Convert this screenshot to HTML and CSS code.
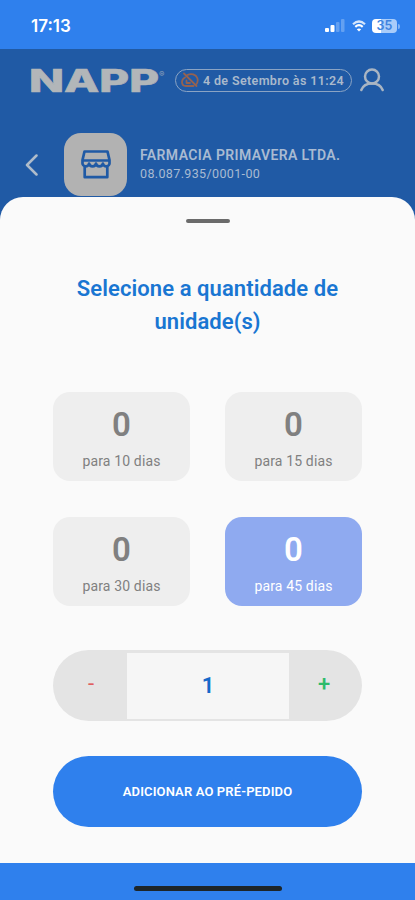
FILE: index.html
```html
<!DOCTYPE html>
<html lang="pt-BR">
<head>
<meta charset="utf-8">
<meta name="viewport" content="width=device-width, initial-scale=1">
<title>NAPP</title>
<link rel="stylesheet" href="styles.css">
</head>
<body>
<div class="status">
  <span class="time">17:13</span>
  <svg class="signal" width="20" height="14" viewBox="0 0 20 14"><g fill="#fff"><rect x="0" y="9" width="4" height="4" rx="1"/><rect x="5.500" y="6" width="4" height="7" rx="1"/><rect x="11" y="3" width="3.500" height="10" rx="1" opacity=".25"/><rect x="16" y="0" width="3.500" height="13" rx="1" opacity=".25"/></g></svg>
  <svg class="wifi" width="14" height="12" viewBox="0 0 14 12" fill="none" stroke="#fff" stroke-width="2.200"><path d="M1 4.200Q7-1.200 13 4.200" opacity=".8"/><path d="M3.300 6.800Q7 3.600 10.700 6.800"/><path d="M7 11.500 4.800 9.200Q7 7.600 9.200 9.200Z" fill="#fff" stroke="none"/></svg>
  <span class="battery">35</span><i class="battery-tip"></i>
</div>
<header class="top">
  <div class="brand-row">
    <svg class="logo" width="140" height="26" viewBox="0 0 140 26"><text x="0" y="25" textLength="130" lengthAdjust="spacingAndGlyphs" class="logo-text">NAPP</text><text x="130" y="9.500" class="reg">®</text></svg>
    <div class="sync">
      <svg width="18" height="16" viewBox="0 0 18 16" fill="none" stroke="#946250" stroke-width="1.800" stroke-linecap="round" stroke-linejoin="round"><path d="M4 5.500C2 6.500 1 8 1 10c0 2.500 1.800 4 4 4h7.500M6.500 3C10 1 15 2.500 16.300 6c.8 2.500.3 5-1.500 6.800M3 1.500l12.500 12.500M5.500 8.500v2.500h3.500"/></svg>
      <span>4 de Setembro às 11:24</span>
    </div>
    <svg class="user" width="26" height="24" viewBox="0 0 26 24" fill="none" stroke="#a9b5c3" stroke-width="2.500" stroke-linecap="round"><circle cx="13" cy="8.500" r="7"/><path d="M2.300 22C4 17.500 7.500 15.500 13 15.500S22 17.500 23.700 22"/></svg>
  </div>
  <div class="store-row">
    <svg class="back" width="13" height="22" viewBox="0 0 13 22" fill="none" stroke="#afbcca" stroke-width="2.500" stroke-linecap="round" stroke-linejoin="round"><path d="M11.500 1.500 2 11 11.500 20.500"/></svg>
    <div class="store-icon"><svg width="30" height="29" viewBox="0 0 30 29" fill="none" stroke="#205aa5" stroke-width="2.700" stroke-linejoin="round" stroke-linecap="round"><path d="M3.500 1.500h23l2 8.500v2.500a3.300 3.300 0 0 1-6.600 1 3.500 3.500 0 0 1-6.900 0 3.500 3.500 0 0 1-6.900 0 3.300 3.300 0 0 1-6.600-1V10ZM2 10.500h26M3.700 16.500v10.700h22.600V16.500"/></svg></div>
    <div class="store"><div class="store-name">FARMACIA PRIMAVERA LTDA.</div><div class="store-id">08.087.935/0001-00</div></div>
  </div>
</header>
<main class="sheet">
  <div class="handle"></div>
  <h1>Selecione a quantidade de<br>unidade(s)</h1>
  <div class="options">
    <div class="option"><b>0</b><span>para 10 dias</span></div>
    <div class="option"><b>0</b><span>para 15 dias</span></div>
    <div class="option"><b>0</b><span>para 30 dias</span></div>
    <div class="option selected"><b>0</b><span>para 45 dias</span></div>
  </div>
  <div class="stepper"><span class="minus">-</span><span class="value">1</span><span class="plus">+</span></div>
  <div class="submit">ADICIONAR AO PRÉ-PEDIDO</div>
</main>
<footer><div class="home"></div></footer>
</body>
</html>
```
FILE: styles.css
```css
* { box-sizing: border-box; }
body { margin: 0; width: 415px; height: 900px; overflow: hidden; display: flex; flex-direction: column; background: #205aa5; font-family: Roboto, sans-serif; }
svg { display: block; flex: none; }
.status { height: 49px; flex: none; background: #2f80ed; display: flex; align-items: center; padding: 3px 15px 0 31px; color: #fff; }
.time { font: 600 17px/20px Inter, sans-serif; letter-spacing: 0; margin-right: auto; }
.signal { margin-right: 7px; }
.wifi { margin-right: 6px; }
.battery { width: 25px; height: 14px; border-radius: 4px; background: linear-gradient(90deg, #fff 36%, #a9ccfa 36%); color: #3e83df; font: 600 12.5px/14px Inter, sans-serif; text-align: center; }
.battery-tip { width: 2px; height: 5px; margin-left: 1px; border-radius: 0 2px 2px 0; background: #83b4f5; }
.top { height: 148px; flex: none; }
.brand-row { display: flex; align-items: center; height: 24px; margin: 19px 0 0 29px; }
.logo { overflow: visible; }
.logo-text { font: 800 31px Inter, sans-serif; fill: #b2b6b9; stroke: #b2b6b9; stroke-width: .6px; }
.reg { font: 8px Inter, sans-serif; fill: #91a4bb; }
.sync { width: 177px; height: 23px; margin-left: 6px; border: 1.5px solid #8ba4c4; border-radius: 12px; display: flex; align-items: center; gap: 4px; padding-left: 5px; color: #a9b9cc; font-size: 12.5px; font-weight: 600; letter-spacing: .36px; white-space: nowrap; }
.user { margin-left: 7px; }
.store-row { display: flex; align-items: center; height: 63px; margin: 41px 0 0 25px; }
.store-icon { width: 63px; height: 63px; margin-left: 26px; border-radius: 17px; background: #b2b2b2; display: flex; align-items: center; justify-content: center; }
.store { margin-left: 13px; color: #a9bbd2; }
.store-name { font-size: 14px; line-height: 19px; font-weight: 600; letter-spacing: .39px; white-space: nowrap; }
.store-id { font-size: 12.5px; line-height: 18px; letter-spacing: .37px; }
.sheet { height: 666px; flex: none; background: #fafafa; border-radius: 23px 23px 0 0; padding: 22px 53px 0; }
.handle { width: 44px; height: 4px; margin: 0 auto; border-radius: 2px; background: #6b6b6b; }
h1 { margin: 49px -20px 0; color: #1976d2; font-size: 22px; line-height: 33px; font-weight: 600; text-align: center; letter-spacing: .08px; white-space: nowrap; }
.options { margin-top: 53.5px; display: grid; grid-template-columns: 137px 137px; grid-auto-rows: 89px; gap: 36px 35px; }
.option { border-radius: 17px; background: #eee; color: #808080; display: flex; flex-direction: column; align-items: center; padding-top: 13px; }
.option b { font-size: 33px; line-height: 40px; font-weight: 600; }
.option span { font-size: 14px; line-height: 20px; margin-top: 6px; letter-spacing: .15px; }
.option.selected { background: #8faaf0; color: #fff; }
.stepper { height: 71px; margin-top: 44.5px; border-radius: 36px; background: #e4e4e4; display: grid; grid-template-columns: 74px 162px 73px; align-items: center; text-align: center; padding: 2px 0; font-size: 22px; }
.value { height: 66px; line-height: 66px; background: #f6f6f6; color: #1669c9; font-weight: 600; }
.minus { color: #e05f5f; padding: 0 0 5px 2px; }
.plus { color: #2dbb6b; font-weight: 500; padding: 0 3px 5px 0; }
.submit { height: 71px; margin-top: 35px; border-radius: 36px; background: #2f80ed; color: #fff; font-size: 13px; line-height: 71px; font-weight: 600; letter-spacing: .14px; text-align: center; }
footer { flex: 1; background: #2f80ed; padding-top: 23px; }
.home { width: 148px; height: 5px; margin: 0 auto; border-radius: 3px; background: #1d2529; }
```
